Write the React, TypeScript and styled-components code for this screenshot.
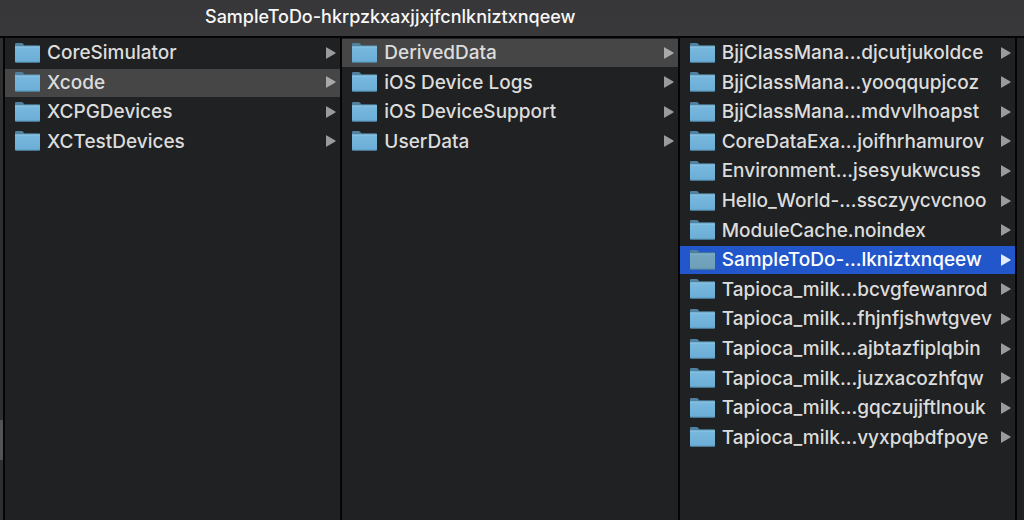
import React from "react";
import styled, { createGlobalStyle } from "styled-components";

const GlobalStyle = createGlobalStyle`
  * { box-sizing: border-box; }
  body {
    margin: 0;
    background: #1f2122;
    color: #dcdcdc;
    font-family: Inter, "Liberation Sans", sans-serif;
  }
`;

const Window = styled.main`
  display: flex;
  flex-direction: column;
  min-height: 100vh;
`;

const TitleBar = styled.header`
  height: 38px;
  padding: 5px 0 0 205px;
  background: linear-gradient(#373739, #39393b);
  border-bottom: 2px solid #050505;
`;

const Title = styled.h1`
  margin: 0;
  color: #f7f7f7;
  font-size: 18px;
  font-weight: 500;
  line-height: 24px;
  white-space: nowrap;
`;

const Browser = styled.div`
  flex: 1;
  display: grid;
  grid-template-columns: 5px repeat(3, minmax(0, 1fr)) 7px;
`;

const SidebarEdge = styled.div`
  display: flex;
  flex-direction: column;
  justify-content: flex-end;
  padding-bottom: 60px;
  background: #2d2e30;
  border-right: 2px solid #050505;
`;

const SidebarHighlight = styled.div`
  height: 40px;
  background: #525355;
`;

const Column = styled.section`
  padding-top: 1px;
  border-right: 2px solid #050505;
`;

const List = styled.ul`
  display: grid;
  grid-template-columns: minmax(0, 1fr);
  grid-template-rows: repeat(14, 28px);
  align-content: space-between;
  height: 413px;
  margin: 0;
  padding: 0;
  list-style: none;
`;

type RowState = "plain" | "open" | "selected";

const rowFill = { plain: "transparent", open: "#464646", selected: "#2157cb" };
const arrowFill = { plain: "#9b9b9d", open: "#a9a9a9", selected: "#e4ebfb" };

const Row = styled.button<{ $state: RowState }>`
  display: flex;
  align-items: center;
  gap: 7px;
  width: 100%;
  height: 28px;
  padding: 0 4px 1px 10px;
  border: 0;
  background: ${(p) => rowFill[p.$state]};
  color: ${(p) => (p.$state === "selected" ? "#ffffff" : "inherit")};
  font: inherit;
  font-size: 19px;
  font-weight: 500;
  line-height: 27px;
  text-align: left;
`;

const Name = styled.span`
  flex: 1;
  min-width: 0;
  white-space: nowrap;
`;

const FolderSvg = styled.svg`
  flex: none;
`;

const ArrowSvg = styled.svg<{ $state: RowState }>`
  flex: none;
  fill: ${(p) => arrowFill[p.$state]};
`;

const brightFolder = { id: "folder-bright", top: "#79b9df", bottom: "#6badd6", back: "#50819f", shine: "#95cbe8", foot: "#4b819f" };
const dimFolder = { id: "folder-dim", top: "#74a6bf", bottom: "#6d9fb9", back: "#4f7f9c", shine: "#8dbad0", foot: "#4b7c97" };

function Folder({ dim }: { dim: boolean }) {
  const tone = dim ? dimFolder : brightFolder;
  return (
    <FolderSvg width="25" height="20" viewBox="0 0 25 20" aria-hidden="true">
      <defs>
        <linearGradient id={tone.id} x1="0" y1="0" x2="0" y2="1">
          <stop offset="0" stopColor={tone.top} />
          <stop offset="1" stopColor={tone.bottom} />
        </linearGradient>
      </defs>
      <path d="M0 1.2Q0 0 1.2 0H6.6Q7.6 0 8.2 .8L9.2 2.2H24Q25 2.2 25 3.2V8H0Z" fill={tone.back} />
      <path d="M0 3.6H25V18.5Q25 19.5 24 19.5H1Q0 19.5 0 18.5Z" fill={`url(#${tone.id})`} />
      <path d="M0 4H25" stroke={tone.shine} strokeWidth=".8" />
      <path d="M.3 19.2H24.7" stroke={tone.foot} strokeWidth=".8" />
    </FolderSvg>
  );
}

function Arrow({ state }: { state: RowState }) {
  return (
    <ArrowSvg $state={state} width="10" height="12" viewBox="0 0 10 12" aria-hidden="true">
      <path d="M0 .8Q0 0 .8 .4L9.4 5.4Q10 6 9.4 6.6L.8 11.6Q0 12 0 11.2Z" />
    </ArrowSvg>
  );
}

interface ColumnData {
  label: string;
  names: string[];
  active: string;
  state: RowState;
}

const columns: ColumnData[] = [
  {
    label: "Developer",
    names: ["CoreSimulator", "Xcode", "XCPGDevices", "XCTestDevices"],
    active: "Xcode",
    state: "open",
  },
  {
    label: "Xcode",
    names: ["DerivedData", "iOS Device Logs", "iOS DeviceSupport", "UserData"],
    active: "DerivedData",
    state: "open",
  },
  {
    label: "DerivedData",
    names: [
      "BjjClassMana...djcutjukoldce",
      "BjjClassMana...yooqqupjcoz",
      "BjjClassMana...mdvvlhoapst",
      "CoreDataExa...joifhrhamurov",
      "Environment...jsesyukwcuss",
      "Hello_World-...ssczyycvcnoo",
      "ModuleCache.noindex",
      "SampleToDo-...lkniztxnqeew",
      "Tapioca_milk...bcvgfewanrod",
      "Tapioca_milk...fhjnfjshwtgvev",
      "Tapioca_milk...ajbtazfiplqbin",
      "Tapioca_milk...juzxacozhfqw",
      "Tapioca_milk...gqczujjftlnouk",
      "Tapioca_milk...vyxpqbdfpoye",
    ],
    active: "SampleToDo-...lkniztxnqeew",
    state: "selected",
  },
];

export default function App() {
  return (
    <Window>
      <GlobalStyle />
      <TitleBar>
        <Title>SampleToDo-hkrpzkxaxjjxjfcnlkniztxnqeew</Title>
      </TitleBar>
      <Browser>
        <SidebarEdge>
          <SidebarHighlight />
        </SidebarEdge>
        {columns.map((column) => (
          <Column key={column.label}>
            <List>
              {column.names.map((name) => {
                const state = name === column.active ? column.state : "plain";
                return (
                  <li key={name}>
                    <Row type="button" $state={state}>
                      <Folder dim={state === "selected"} />
                      <Name>{name}</Name>
                      <Arrow state={state} />
                    </Row>
                  </li>
                );
              })}
            </List>
          </Column>
        ))}
      </Browser>
    </Window>
  );
}
